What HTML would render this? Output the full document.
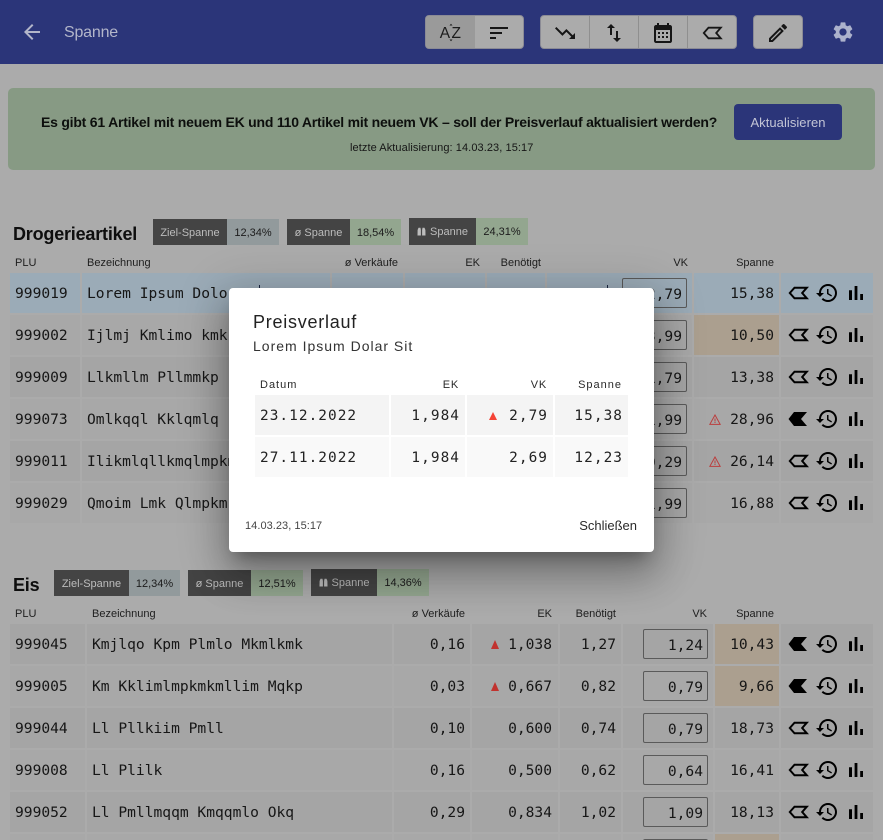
<!DOCTYPE html>
<html lang="de"><head><meta charset="utf-8"><title>Spanne</title>
<style>
html,body{margin:0;padding:0;width:883px;height:840px;overflow:hidden}
#page{position:absolute;left:0;top:0;width:883px;height:840px;overflow:hidden;background:#ababab;font-family:"Liberation Sans",sans-serif;color:#141414}
.a{position:absolute}
#top{left:0;top:0;width:883px;height:64px;background:#2b3579}
.grp{position:absolute;top:15px;height:32px;background:#ababab;border:1px solid #8b8b95;border-radius:4px;box-sizing:content-box}
.dv{position:absolute;top:0;width:1px;height:32px;background:#8f8f8f}
svg{display:block;overflow:visible}
.ic{position:absolute;width:24px;height:24px}
.h{position:absolute;font-size:11px;line-height:16px;color:#1e1e1e;white-space:nowrap}
.r{text-align:right}
.chip{position:absolute;height:26px;line-height:28px;font-size:11px;text-align:center;white-space:nowrap}
.t{height:27px;line-height:29px}
.chip svg{display:inline-block;vertical-align:-1px;margin-right:4px}
.d{background:#444;color:#bdbdbd}
.n{background:#929a9c;color:#1c1c1c}
.g{background:#93a68f;color:#1c1c1c}
h2{position:absolute;margin:0;font-size:18px;line-height:26px;font-weight:700;color:#0e0e0e;letter-spacing:-.2px}
.row{position:absolute;left:0;width:883px;height:40px;font:14.6px/42px "DejaVu Sans Mono",monospace;color:#161616;white-space:nowrap}
.row>div{position:absolute;top:0;height:40px;background:#a5a5a5;box-sizing:border-box;overflow:hidden}
.alt>div{background:#a8a8a8}
.sel>div{background:#9babb7}
.row>div.tan{background:#ab9f8f}
.c1{left:10px;padding-left:5px}
.s1 .c1{width:70px}.s1 .c2{left:82px;width:248px;padding-left:5px}.s1 .c3{left:332px;width:71px}.s1 .c4{left:405px;width:80px}.s1 .c5{left:487px;width:58px}.s1 .c6{left:547px;width:145px}.s1 .c7{left:694px;width:85px;text-align:right;padding-right:5px}.c8{left:781px;width:92px}
.s2 .c1{width:75px}.s2 .c2{left:87px;width:305px;padding-left:5px}.s2 .c3{left:394px;width:76px;text-align:right;padding-right:5px}.s2 .c4{left:472px;width:86px;text-align:right;padding-right:6px}.s2 .c5{left:560px;width:61px;text-align:right;padding-right:5px}.s2 .c6{left:623px;width:90px}.s2 .c7{left:715px;width:64px;text-align:right;padding-right:5px}
.inp{position:absolute;top:5px;width:65px;height:30px;border:1px solid #5a5a5a;border-radius:2px;box-sizing:border-box;text-align:right;padding-right:4px;line-height:32px}
.s1 .inp{left:75px}.s2 .inp{left:20px}
.u1,.u2,.u3{position:absolute;top:8px;width:24px;height:24px}
.u1{left:5px}.u2{left:34px}.u3{left:63px}
.tri{position:absolute;width:0;height:0;border-left:4.5px solid transparent;border-right:4.5px solid transparent;border-bottom:9px solid #c1322e}
.w{position:absolute;left:15px;top:15px;width:12px;height:11px}
#ov{left:229px;top:288px;width:425px;height:264px;background:#fff;border-radius:4px;box-shadow:0 11px 15px -7px rgba(0,0,0,.3),0 24px 38px 3px rgba(0,0,0,.2),0 9px 46px 8px rgba(0,0,0,.18)}
#ov .cell{position:absolute;height:40px;font:14.4px/42px "DejaVu Sans Mono",monospace;letter-spacing:1.05px;color:#222;box-sizing:border-box;white-space:nowrap}
#ov .h2{position:absolute;top:89px;font-size:11px;line-height:16px;letter-spacing:1px;color:#2a2a2a;white-space:nowrap}
</style></head><body><div id="page">
<svg width="0" height="0" style="position:absolute"><defs>
<symbol id="lab" viewBox="0 0 24 24"><path d="M3.800 12 8.500 6.700H20.800l-4.600 5.300 4.600 5.300H8.500z" fill="none" stroke="#000" stroke-width="2"/></symbol>
<symbol id="labf" viewBox="0 0 24 24"><path d="M2.500 12 8 5H21l-6 7 6 7H8z" fill="#000"/></symbol>
<symbol id="his" viewBox="0 0 24 24"><path d="M13 3c-4.970 0-9 4.030-9 9H1l3.890 3.890.07.14L9 12H6c0-3.870 3.130-7 7-7s7 3.130 7 7-3.130 7-7 7c-1.930 0-3.680-.79-4.940-2.060l-1.420 1.420C8.270 19.990 10.510 21 13 21c4.970 0 9-4.030 9-9s-4.030-9-9-9zm-1 5v5l4.280 2.540.72-1.210-3.500-2.080V8H12z" fill="#000"/></symbol>
<symbol id="bar" viewBox="0 0 24 24"><path d="M5 9.200h3V19H5zM10.600 5h2.800v14h-2.800zm5.600 8H19v6h-2.800z" fill="#000"/></symbol>
<symbol id="warn" viewBox="0 0 12 11"><path d="M6 1 11.200 10.400H.8z" fill="none" stroke="#bb3d3d" stroke-width="1"/><path d="M5.500 4.500h1v3h-1zM5.500 8h1v1h-1z" fill="#bb3d3d"/></symbol>
<symbol id="bin" viewBox="0 0 9 9"><path d="M.6 3 1.500.8h2L3.900 3v5.500H.5zM5.100 3 5.500.8h2L8.400 3 8.500 8.500H5.100z" fill="#bdbdbd"/></symbol>
</defs></svg>

<div class="a" id="top"></div>
<svg class="ic" style="left:20px;top:20px" viewBox="0 0 24 24"><path d="M20 11H7.830l5.590-5.590L12 4l-8 8 8 8 1.410-1.410L7.830 13H20v-2z" fill="#b3b6ca"/></svg>
<div class="a" style="left:64px;top:23px;font-size:16px;line-height:20px;color:#b3b6ca;letter-spacing:-.2px">Spanne</div>

<div class="grp" style="left:425px;width:97px"><div style="position:absolute;left:0;top:0;width:49px;height:32px;background:#9a9a9a;border-radius:3px 0 0 3px"></div></div>
<svg class="a" style="left:439px;top:20px" width="24" height="24" viewBox="0 0 24 24"><text x="0.800" y="18" font-family="Liberation Sans" font-size="15.500" fill="#1c1c1c">A</text><text x="12.500" y="18" font-family="Liberation Sans" font-size="15.500" fill="#1c1c1c">Z</text><path d="M10.500 5.500 12 3.800l1.500 1.700zM10.500 19.500l1.500 1.700 1.500-1.700z" fill="#1c1c1c"/></svg>
<svg class="ic" style="left:487px;top:21px" viewBox="0 0 24 24"><path d="M3 18h6v-2H3v2zM3 6v2h18V6H3zm0 7h12v-2H3v2z" fill="#161616"/></svg>

<div class="grp" style="left:540px;width:195px"><div class="dv" style="left:48px"></div><div class="dv" style="left:97px"></div><div class="dv" style="left:146px"></div></div>
<svg class="ic" style="left:553px;top:21px" viewBox="0 0 24 24"><path d="M16 18l2.290-2.290-4.880-4.880-4 4L2 7.410 3.410 6l6 6 4-4 6.300 6.290L22 12v6z" fill="#161616"/></svg>
<svg class="ic" style="left:602px;top:21px" viewBox="0 0 24 24"><path d="M16 17.010V10h-2v7.010h-3L15 21l4-3.990h-3zM9 3L5 6.990h3V14h2V6.990h3L9 3z" fill="#161616"/></svg>
<svg class="ic" style="left:651px;top:22px" viewBox="0 0 24 24"><path d="M19 3h-1V1h-2v2H8V1H6v2H5c-1.100 0-2 .9-2 2v14c0 1.100.9 2 2 2h14c1.100 0 2-.9 2-2V5c0-1.100-.9-2-2-2zm0 16H5V8h14v11z" fill="#161616"/><path d="M7 10h2v2H7zm4 0h2v2h-2zm4 0h2v2h-2zM7 14h2v2H7zm4 0h2v2h-2zm4 0h2v2h-2z" fill="#161616"/></svg>
<svg class="ic" style="left:700px;top:21px" viewBox="0 0 24 24"><path d="M3.800 12 8.500 6.700H20.800l-4.600 5.300 4.600 5.300H8.500z" fill="none" stroke="#161616" stroke-width="1.800"/></svg>

<div class="grp" style="left:753px;width:48px"></div>
<svg class="ic" style="left:766px;top:21px" viewBox="0 0 24 24"><path d="M3 17.250V21h3.750L17.810 9.940l-3.750-3.750L3 17.250zM5.920 19H5v-.92l9.060-9.060.92.92L5.920 19zM20.710 7.040c.39-.39.39-1.020 0-1.410l-2.340-2.340c-.2-.2-.45-.29-.71-.29s-.51.1-.7.28l-1.830 1.830 3.750 3.750 1.830-1.820z" fill="#161616"/></svg>
<svg class="ic" style="left:831px;top:20px" viewBox="0 0 24 24"><path d="M19.140 12.940c.04-.3.06-.61.06-.94 0-.32-.02-.64-.07-.94l2.030-1.580c.18-.14.23-.41.12-.61l-1.920-3.320c-.12-.22-.37-.29-.59-.22l-2.390.96c-.5-.38-1.030-.7-1.620-.94l-.36-2.540c-.04-.24-.24-.41-.48-.41h-3.840c-.24 0-.43.17-.47.41l-.36 2.540c-.59.24-1.130.57-1.620.94l-2.390-.96c-.22-.08-.47 0-.59.22L2.740 8.870c-.12.21-.08.47.12.61l2.030 1.580c-.05.3-.09.63-.09.94s.02.64.07.94l-2.030 1.580c-.18.14-.23.41-.12.61l1.920 3.320c.12.22.37.29.59.22l2.390-.96c.5.38 1.030.7 1.620.94l.36 2.540c.05.24.24.41.48.41h3.840c.24 0 .44-.17.47-.41l.36-2.540c.59-.24 1.130-.56 1.620-.94l2.390.96c.22.08.47 0 .59-.22l1.920-3.320c.12-.22.07-.47-.12-.61l-2.010-1.580zM12 15.600c-1.980 0-3.600-1.620-3.600-3.600s1.620-3.600 3.600-3.600 3.600 1.620 3.600 3.600-1.620 3.600-3.600 3.600z" fill="#acb2cc"/></svg>

<div class="a" style="left:8px;top:88px;width:867px;height:82px;background:#879a84;border-radius:5px"></div>
<div class="a" style="left:41px;top:112px;width:690px;font-size:14px;line-height:20px;font-weight:700;color:#0d0f0d;white-space:nowrap;letter-spacing:-.22px">Es gibt 61 Artikel mit neuem EK und 110 Artikel mit neuem VK – soll der Preisverlauf aktualisiert werden?</div>
<div class="a" style="left:350px;top:141px;font-size:11px;line-height:14px;color:#161616;white-space:nowrap;letter-spacing:.08px">letzte Aktualisierung: 14.03.23, 15:17</div>
<div class="a" style="left:734px;top:104px;width:108px;height:36px;background:#2b3579;border-radius:4px;color:#c3c5d6;font-size:13px;line-height:38px;text-align:center;letter-spacing:.05px">Aktualisieren</div>

<h2 style="left:13px;top:221px">Drogerieartikel</h2>
<div class="chip d" style="left:153px;top:219px;width:74px">Ziel-Spanne</div><div class="chip n" style="left:227px;top:219px;width:52px">12,34%</div>
<div class="chip d" style="left:287px;top:219px;width:63px">ø Spanne</div><div class="chip g" style="left:350px;top:219px;width:51px">18,54%</div>
<div class="chip d t" style="left:409px;top:218px;width:67px"><svg width="9" height="9" style="margin-right:4px"><use href="#bin"/></svg>Spanne</div><div class="chip g t" style="left:476px;top:218px;width:52px">24,31%</div>

<div class="h" style="left:15px;top:255px">PLU</div>
<div class="h" style="left:87px;top:255px">Bezeichnung</div>
<div class="h r" style="right:485px;top:255px">ø Verkäufe</div>
<div class="h r" style="right:403px;top:255px">EK</div>
<div class="h r" style="right:342px;top:255px">Benötigt</div>
<div class="h r" style="right:195px;top:255px">VK</div>
<div class="h r" style="right:109px;top:255px">Spanne</div>

<div class="row s1 sel" style="top:273px"><div class="c1">999019</div><div class="c2">Lorem Ipsum Dolor</div><div class="c3"></div><div class="c4"></div><div class="c5"></div><div class="c6"><div class="inp">2,79</div></div><div class="c7">15,38</div><div class="c8"><svg class="u1"><use href="#lab"/></svg><svg class="u2"><use href="#his"/></svg><svg class="u3"><use href="#bar"/></svg></div></div>
<div class="a" style="left:259px;top:285px;width:1px;height:3px;background:#1a2440"></div>
<div class="a" style="left:607px;top:285px;width:1px;height:3px;background:#1a2440"></div>
<div class="row s1 alt" style="top:315px"><div class="c1">999002</div><div class="c2">Ijlmj Kmlimo kmk</div><div class="c3"></div><div class="c4"></div><div class="c5"></div><div class="c6"><div class="inp">3,99</div></div><div class="c7 tan">10,50</div><div class="c8"><svg class="u1"><use href="#lab"/></svg><svg class="u2"><use href="#his"/></svg><svg class="u3"><use href="#bar"/></svg></div></div>
<div class="row s1" style="top:357px"><div class="c1">999009</div><div class="c2">Llkmllm Pllmmkp</div><div class="c3"></div><div class="c4"></div><div class="c5"></div><div class="c6"><div class="inp">1,79</div></div><div class="c7">13,38</div><div class="c8"><svg class="u1"><use href="#lab"/></svg><svg class="u2"><use href="#his"/></svg><svg class="u3"><use href="#bar"/></svg></div></div>
<div class="row s1 alt" style="top:399px"><div class="c1">999073</div><div class="c2">Omlkqql Kklqmlq</div><div class="c3"></div><div class="c4"></div><div class="c5"></div><div class="c6"><div class="inp">1,99</div></div><div class="c7"><svg class="w"><use href="#warn"/></svg>28,96</div><div class="c8"><svg class="u1"><use href="#labf"/></svg><svg class="u2"><use href="#his"/></svg><svg class="u3"><use href="#bar"/></svg></div></div>
<div class="row s1" style="top:441px"><div class="c1">999011</div><div class="c2">Ilikmlqllkmqlmpkmlk</div><div class="c3"></div><div class="c4"></div><div class="c5"></div><div class="c6"><div class="inp">0,29</div></div><div class="c7"><svg class="w"><use href="#warn"/></svg>26,14</div><div class="c8"><svg class="u1"><use href="#lab"/></svg><svg class="u2"><use href="#his"/></svg><svg class="u3"><use href="#bar"/></svg></div></div>
<div class="row s1 alt" style="top:483px"><div class="c1">999029</div><div class="c2">Qmoim Lmk Qlmpkm</div><div class="c3"></div><div class="c4"></div><div class="c5"></div><div class="c6"><div class="inp">1,99</div></div><div class="c7">16,88</div><div class="c8"><svg class="u1"><use href="#lab"/></svg><svg class="u2"><use href="#his"/></svg><svg class="u3"><use href="#bar"/></svg></div></div>

<h2 style="left:13px;top:572px">Eis</h2>
<div class="chip d" style="left:54px;top:570px;width:75px">Ziel-Spanne</div><div class="chip n" style="left:129px;top:570px;width:51px">12,34%</div>
<div class="chip d" style="left:188px;top:570px;width:63px">ø Spanne</div><div class="chip g" style="left:251px;top:570px;width:52px">12,51%</div>
<div class="chip d t" style="left:311px;top:569px;width:66px"><svg width="9" height="9" style="margin-right:4px"><use href="#bin"/></svg>Spanne</div><div class="chip g t" style="left:377px;top:569px;width:52px">14,36%</div>

<div class="h" style="left:15px;top:606px">PLU</div>
<div class="h" style="left:92px;top:606px">Bezeichnung</div>
<div class="h r" style="right:418px;top:606px">ø Verkäufe</div>
<div class="h r" style="right:331px;top:606px">EK</div>
<div class="h r" style="right:267px;top:606px">Benötigt</div>
<div class="h r" style="right:176px;top:606px">VK</div>
<div class="h r" style="right:109px;top:606px">Spanne</div>

<div class="row s2" style="top:624px"><div class="c1">999045</div><div class="c2">Kmjlqo Kpm Plmlo Mkmlkmk</div><div class="c3">0,16</div><div class="c4"><span class="tri" style="left:19px;top:16px"></span>1,038</div><div class="c5">1,27</div><div class="c6"><div class="inp">1,24</div></div><div class="c7 tan">10,43</div><div class="c8"><svg class="u1"><use href="#labf"/></svg><svg class="u2"><use href="#his"/></svg><svg class="u3"><use href="#bar"/></svg></div></div>
<div class="row s2 alt" style="top:666px"><div class="c1">999005</div><div class="c2">Km Kklimlmpkmkmllim Mqkp</div><div class="c3">0,03</div><div class="c4"><span class="tri" style="left:19px;top:16px"></span>0,667</div><div class="c5">0,82</div><div class="c6"><div class="inp">0,79</div></div><div class="c7 tan">9,66</div><div class="c8"><svg class="u1"><use href="#labf"/></svg><svg class="u2"><use href="#his"/></svg><svg class="u3"><use href="#bar"/></svg></div></div>
<div class="row s2" style="top:708px"><div class="c1">999044</div><div class="c2">Ll Pllkiim Pmll</div><div class="c3">0,10</div><div class="c4">0,600</div><div class="c5">0,74</div><div class="c6"><div class="inp">0,79</div></div><div class="c7">18,73</div><div class="c8"><svg class="u1"><use href="#lab"/></svg><svg class="u2"><use href="#his"/></svg><svg class="u3"><use href="#bar"/></svg></div></div>
<div class="row s2 alt" style="top:750px"><div class="c1">999008</div><div class="c2">Ll Plilk</div><div class="c3">0,16</div><div class="c4">0,500</div><div class="c5">0,62</div><div class="c6"><div class="inp">0,64</div></div><div class="c7">16,41</div><div class="c8"><svg class="u1"><use href="#lab"/></svg><svg class="u2"><use href="#his"/></svg><svg class="u3"><use href="#bar"/></svg></div></div>
<div class="row s2" style="top:792px"><div class="c1">999052</div><div class="c2">Ll Pmllmqqm Kmqqmlo Okq</div><div class="c3">0,29</div><div class="c4">0,834</div><div class="c5">1,02</div><div class="c6"><div class="inp">1,09</div></div><div class="c7">18,13</div><div class="c8"><svg class="u1"><use href="#lab"/></svg><svg class="u2"><use href="#his"/></svg><svg class="u3"><use href="#bar"/></svg></div></div>
<div class="row s2 alt" style="top:834px"><div class="c1"></div><div class="c2"></div><div class="c3"></div><div class="c4"></div><div class="c5"></div><div class="c6"><div class="inp"></div></div><div class="c7 tan"></div><div class="c8"></div></div>

<div class="a" id="ov">
<div class="a" style="left:24px;top:22px;font-size:18px;line-height:24px;letter-spacing:.75px;color:#222;white-space:nowrap">Preisverlauf</div>
<div class="a" style="left:24px;top:49px;font-size:14px;line-height:18px;letter-spacing:1px;color:#333;white-space:nowrap">Lorem Ipsum Dolar Sit</div>
<div class="h2" style="left:31px">Datum</div>
<div class="h2" style="right:195px;letter-spacing:.8px">EK</div>
<div class="h2" style="right:107px;letter-spacing:.8px">VK</div>
<div class="h2" style="right:32px">Spanne</div>
<div class="cell" style="left:26px;top:107px;width:134px;background:#f4f4f4;padding-left:5px">23.12.2022</div>
<div class="cell" style="left:162px;top:107px;width:74px;background:#f4f4f4;text-align:right;padding-right:5px">1,984</div>
<div class="cell" style="left:238px;top:107px;width:86px;background:#f4f4f4;text-align:right;padding-right:5px"><span class="tri" style="left:22px;top:17px;border-bottom:8.500px solid #f44336"></span>2,79</div>
<div class="cell" style="left:326px;top:107px;width:73px;background:#f4f4f4;text-align:right;padding-right:5px">15,38</div>
<div class="cell" style="left:26px;top:149px;width:134px;background:#f9f9f9;padding-left:5px">27.11.2022</div>
<div class="cell" style="left:162px;top:149px;width:74px;background:#f9f9f9;text-align:right;padding-right:5px">1,984</div>
<div class="cell" style="left:238px;top:149px;width:86px;background:#f9f9f9;text-align:right;padding-right:5px">2,69</div>
<div class="cell" style="left:326px;top:149px;width:73px;background:#f9f9f9;text-align:right;padding-right:5px">12,23</div>
<div class="a" style="left:16px;top:231px;font-size:11px;line-height:14px;color:#444;white-space:nowrap;letter-spacing:.05px">14.03.23, 15:17</div>
<div class="a" style="right:17px;top:230px;font-size:13px;line-height:16px;color:#2a2a2a;white-space:nowrap">Schließen</div>
</div>
</div></body></html>
